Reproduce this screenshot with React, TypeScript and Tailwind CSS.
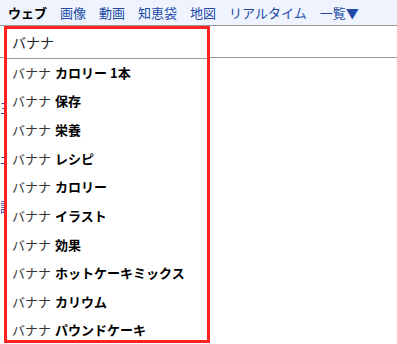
import React from 'react';

const tabs = ['画像', '動画', '知恵袋', '地図', 'リアルタイム'];

const suggestions = [
    'カロリー 1本',
    '保存',
    '栄養',
    'レシピ',
    'カロリー',
    'イラスト',
    '効果',
    'ホットケーキミックス',
    'カリウム',
    'パウンドケーキ',
];

const App: React.FC = () => {
    return (
        <div className="relative w-[397px] h-[344px] overflow-hidden bg-white text-[13px] font-['Noto_Sans_CJK_JP','Noto_Sans',sans-serif]">
            {/* 上部タブ */}
            <div className="flex items-center h-[26px] px-[8px] gap-[13px] bg-[#eef3fd] border-b border-[#9a9a9a]">
                <span className="font-bold text-black">ウェブ</span>
                {tabs.map((t) => (
                    <span key={t} className="text-[#2149a6]">{t}</span>
                ))}
                <span className="text-[#2149a6]">一覧▼</span>
            </div>
            <div className="h-[32px] border-b border-[#9a9a9a]" />
            <div className="pl-[0px] pt-[40px] flex flex-col gap-[30px] text-[#2149a6]">
                <span>三</span>
                <span>土</span>
                <span>調</span>
            </div>

            {/* 候補リスト */}
            <div className="absolute left-[4px] top-[26px] w-[206px] h-[317px] border-[3px] border-[#ff2222] bg-white">
                <div className="h-[30px] flex items-center pl-[5px] pb-[3px] border-b border-[#9a9a9a] text-[14px] text-[#222]">
                    バナナ
                </div>
                <ul className="-mt-[1px]">
                    {suggestions.map((s) => (
                        <li key={s} className="h-[28.67px] flex items-center pl-[5px] whitespace-nowrap">
                            <span className="text-[#333]">バナナ</span>
                            <span className="ml-[4px] font-bold text-black">{s}</span>
                        </li>
                    ))}
                </ul>
            </div>
        </div>
    );
};

export default App;
